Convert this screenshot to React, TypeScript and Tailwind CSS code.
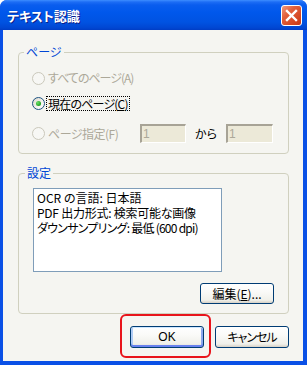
import React from "react";

const FONT = "font-['Noto_Sans_CJK_JP','Noto_Sans',sans-serif] [font-feature-settings:'palt']";

function Radio({ checked, disabled }: { checked?: boolean; disabled?: boolean }) {
  return (
    <div
      className={
        "w-[13px] h-[13px] rounded-full border flex items-center justify-center shrink-0 " +
        (disabled
          ? "border-[#CAC8BB] bg-[#F7F7F4]"
          : "border-[#1D5281] bg-[linear-gradient(135deg,#DCD8CC_0%,#F5F4EF_60%,#FFFFFF_100%)]")
      }
    >
      {checked && (
        <div className="w-[5px] h-[5px] rounded-full bg-[radial-gradient(circle_at_35%_35%,#6BE06B_0%,#21A121_70%,#1A8A1A_100%)]" />
      )}
    </div>
  );
}

function DisabledInput({ w }: { w: string }) {
  return (
    <div
      className={
        w +
        " h-[19px] bg-[#ECE9D8] border-t-2 border-l-2 border-b border-r border-t-[#A7A396] border-l-[#A7A396] border-b-white border-r-white flex items-center pl-[1px] text-[12px] leading-none text-[#ACA899] font-['Liberation_Sans',sans-serif]"
      }
    >
      1
    </div>
  );
}

function XPButton({
  children,
  w,
  h,
  def,
}: {
  children: React.ReactNode;
  w: string;
  h: string;
  def?: boolean;
}) {
  return (
    <div
      className={
        w +
        " " +
        h +
        " shrink-0 rounded-[3px] border border-[#003C74] bg-[linear-gradient(to_bottom,#FFFFFF_0%,#FAFAF8_40%,#F0F0EA_85%,#D6D0C5_100%)] flex items-center justify-center text-[12px] text-black " +
        (def ? "shadow-[inset_0_1px_0_#CEE7FF,inset_0_-2px_0_#6982EE,inset_2px_0_0_#B0CCF5,inset_-2px_0_0_#8CA8EE]" : "")
      }
    >
      {children}
    </div>
  );
}

export default function App() {
  return (
    <div className={"w-[307px] h-[365px] bg-white " + FONT}>
      <div className="w-[307px] h-[365px] flex flex-col rounded-t-[7px] overflow-hidden bg-[#0A50E6]">
        {/* Title bar */}
        <div className="h-[30px] shrink-0 flex items-center justify-between pl-[7px] pr-[5px] bg-[linear-gradient(to_bottom,#3D8EFF_0px,#1D6DF5_2px,#0A5DEE_5px,#0058EC_12px,#0053E2_22px,#0046D2_28px,#003DC4_30px)]">
          <span className="text-white font-bold text-[13px] leading-none [text-shadow:1px_1px_0_#0A1E8A]">
            テキスト認識
          </span>
          <div className="w-[21px] h-[21px] rounded-[3px] border border-white bg-[linear-gradient(135deg,#EE9A80_0%,#E2603C_35%,#D2431E_80%,#C0391A_100%)] flex items-center justify-center">
            <svg width="13" height="13" viewBox="0 0 13 13">
              <path d="M2 2 L11 11 M11 2 L2 11" stroke="white" strokeWidth="2.4" strokeLinecap="square" />
            </svg>
          </div>
        </div>

        {/* Body with borders */}
        <div className="flex-1 flex pl-[3px] pr-[4px] pb-[4px]">
          <div className="relative flex-1 bg-[#F5F5F1] pl-[15px] pt-[22px]">
            {/* Group 1 */}
            <div className="relative w-[271px] border border-[#D0D0BF] rounded-[4px] pl-[13px] pr-[14px] pt-[17px] pb-[10px]">
              <span className="absolute left-[5px] top-[-8px] px-[2px] bg-[#F5F5F1] text-[#0046D5] text-[12px] leading-[14px]">
                ページ
              </span>
              <div className="h-[16px] flex items-center gap-[3px]">
                <Radio disabled />
                <span className="text-[12px] leading-none text-[#ACA899] tracking-[-1px]">すべてのページ(A)</span>
              </div>
              <div className="mt-[9px] h-[16px] flex items-center gap-[2px]">
                <Radio checked />
                <span className="text-[12px] leading-[13px] text-black outline-1 outline-dotted outline-black px-[1px] tracking-[-0.8px]">
                  現在のページ(<span className="underline">C</span>)
                </span>
              </div>
              <div className="mt-[13px] h-[19px] flex items-center">
                <div className="w-[108px] flex items-center gap-[3px]">
                  <Radio disabled />
                  <span className="text-[12px] leading-none text-[#ACA899] tracking-[-0.5px]">ページ指定(F)</span>
                </div>
                <DisabledInput w="w-[46px]" />
                <div className="w-[40px] flex justify-center text-[12px] leading-none text-black">から</div>
                <DisabledInput w="w-[47px]" />
              </div>
            </div>

            {/* Group 2 */}
            <div className="relative mt-[19px] w-[271px] border border-[#D0D0BF] rounded-[4px] pl-[14px] pr-[14px] pt-[14px] pb-[9px]">
              <span className="absolute left-[6px] top-[-8px] px-[2px] bg-[#F5F5F1] text-[#0046D5] text-[12px] leading-[14px]">
                設定
              </span>
              <div className="w-[189px] h-[84px] border border-[#7F9DB9] bg-white pl-[3px] pt-[1px] text-[12px] leading-[15px] text-black">
                <div className="h-[15px]">OCR の言語: 日本語</div>
                <div className="h-[15px] tracking-[-0.25px]">PDF 出力形式: 検索可能な画像</div>
                <div className="h-[15px] tracking-[-0.75px]">ダウンサンプリング: 最低 (600 dpi)</div>
              </div>
              <div className="mt-[11px] flex justify-end">
                <XPButton w="w-[74px]" h="h-[21px]">
                  編集(<span className="underline">E</span>)...
                </XPButton>
              </div>
            </div>

            {/* Bottom buttons */}
            <div className="mt-[12px] w-[271px] flex justify-end gap-[11px]">
              <XPButton w="w-[74px]" h="h-[22px]" def>
                <span className="font-['Liberation_Sans',sans-serif] text-[12px]">OK</span>
              </XPButton>
              <XPButton w="w-[74px]" h="h-[22px]">
                <span className="tracking-[-1px]">キャンセル</span>
              </XPButton>
            </div>

            {/* Red highlight */}
            <div className="absolute left-[117px] top-[284px] w-[91px] h-[44px] border-2 border-[#E8141B] rounded-[6px] pointer-events-none" />
          </div>
        </div>
      </div>
    </div>
  );
}
